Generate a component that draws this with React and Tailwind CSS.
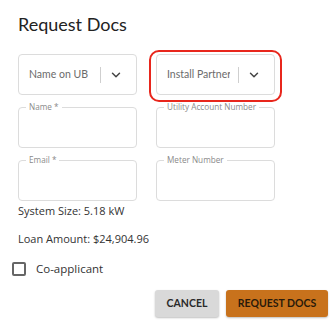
import { ChevronDown } from "lucide-react";

const sans = "font-['Open_Sans','Noto_Sans',sans-serif]";
const geo = "font-['Lato','Inter',sans-serif]";

function SelectBox({ label, highlight }) {
  return (
    <div className="relative">
      {highlight && (
        <div className="absolute -left-[7px] -top-[4px] -right-[7px] -bottom-[7px] rounded-[10px] border-2 border-[#e8261c] pointer-events-none" />
      )}
      <div className="h-[41px] flex items-center rounded-[4px] border border-[#dcdcdc] bg-white pl-[10px] pr-[13px]">
        <span className={`flex-1 min-w-0 overflow-hidden text-[10.5px] text-[#6b6b6b] whitespace-nowrap ${geo}`}>
          {label}
        </span>
        <span className="shrink-0 w-px h-[16px] bg-[#cfcfcf] mx-[8px]" />
        <ChevronDown className="shrink-0 w-[14px] h-[14px] text-[#444]" strokeWidth={2.5} />
      </div>
    </div>
  );
}

function Field({ label }) {
  return (
    <div className="relative h-[41px] rounded-[4px] border border-[#dcdcdc] bg-white">
      <span
        className={`absolute left-[7px] -top-[6px] px-[3px] bg-white text-[8.2px] leading-[10px] text-[#8a8a8a] ${sans}`}
      >
        {label}
      </span>
    </div>
  );
}

export default function App() {
  return (
    <div className="w-[333px] h-[321px] bg-white overflow-hidden pl-[18px] pr-[5px] pt-[13px]">
      <h1 className={`text-[18px] leading-[22px] text-[#222] font-normal ${geo}`}>
        Request Docs
      </h1>

      <div className="mt-[19px] grid grid-cols-[119px_119px] gap-x-[19px] gap-y-[12px]">
        <SelectBox label="Name on UB" />
        <SelectBox label="Install Partner" highlight />
        <Field label="Name *" />
        <Field label="Utility Account Number" />
        <Field label="Email *" />
        <Field label="Meter Number" />
      </div>

      <div className={`text-[11px] text-[#333] ${sans}`}>
        <p className="mt-[2px] leading-[16px]">System Size: 5.18 kW</p>
        <p className="mt-[12px] leading-[16px]">Loan Amount: $24,904.96</p>
      </div>

      <label className={`-ml-[6px] mt-[13px] flex items-center gap-[10px] text-[11.5px] text-[#333] ${sans}`}>
        <span className="w-[14px] h-[14px] rounded-[2px] border-2 border-[#666] bg-white" />
        Co-applicant
      </label>

      <div className="mt-[13px] flex justify-end gap-[7px]">
        <button className={`h-[27px] w-[64px] rounded-[3px] bg-[#d9d9d9] text-[10.5px] font-bold text-[#2a2a2a] shadow-[0_1px_2px_rgba(0,0,0,0.25)] ${geo}`}>
          CANCEL
        </button>
        <button className={`h-[27px] w-[102px] rounded-[3px] bg-[#c8721c] text-[10.5px] font-bold text-[#2a1a0a] shadow-[0_1px_2px_rgba(0,0,0,0.25)] ${geo}`}>
          REQUEST DOCS
        </button>
      </div>
    </div>
  );
}
